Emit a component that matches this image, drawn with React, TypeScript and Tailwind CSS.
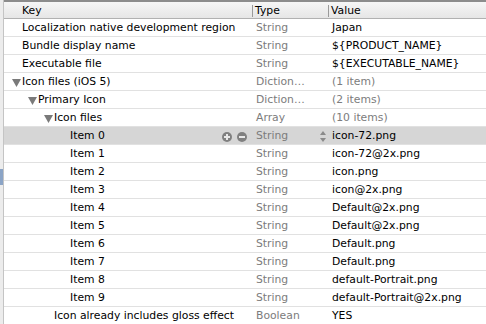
const rows = [
  { key: "Localization native development region", indent: 0, type: "String", value: "Japan" },
  { key: "Bundle display name", indent: 0, type: "String", value: "${PRODUCT_NAME}" },
  { key: "Executable file", indent: 0, type: "String", value: "${EXECUTABLE_NAME}" },
  { key: "Icon files (iOS 5)", indent: 0, type: "Diction…", value: "(1 item)", open: true },
  { key: "Primary Icon", indent: 1, type: "Diction…", value: "(2 items)", open: true },
  { key: "Icon files", indent: 2, type: "Array", value: "(10 items)", open: true },
  { key: "Item 0", indent: 3, type: "String", value: "icon-72.png", selected: true },
  { key: "Item 1", indent: 3, type: "String", value: "icon-72@2x.png" },
  { key: "Item 2", indent: 3, type: "String", value: "icon.png" },
  { key: "Item 3", indent: 3, type: "String", value: "icon@2x.png" },
  { key: "Item 4", indent: 3, type: "String", value: "Default@2x.png" },
  { key: "Item 5", indent: 3, type: "String", value: "Default@2x.png" },
  { key: "Item 6", indent: 3, type: "String", value: "Default.png" },
  { key: "Item 7", indent: 3, type: "String", value: "Default.png" },
  { key: "Item 8", indent: 3, type: "String", value: "default-Portrait.png" },
  { key: "Item 9", indent: 3, type: "String", value: "default-Portrait@2x.png" },
  { key: "Icon already includes gloss effect", indent: 2, type: "Boolean", value: "YES" },
];

const indentClass = ["pl-[18px]", "pl-[34px]", "pl-[50px]", "pl-[66px]"];

const Disclosure = () => (
  <svg width="9" height="8" viewBox="0 0 9 8" className="mr-px">
    <path d="M0 0 H9 L4.5 8 Z" fill="#7a7a7a" />
  </svg>
);

const RoundButton = ({ minus }: { minus?: boolean }) => (
  <svg width="10" height="10" viewBox="0 0 10 10">
    <circle cx="5" cy="5" r="5" fill="#808080" />
    <rect x="2" y="4" width="6" height="2" fill="#e8e8e8" />
    {!minus && <rect x="4" y="2" width="2" height="6" fill="#e8e8e8" />}
  </svg>
);

const Stepper = () => (
  <svg width="6" height="11" viewBox="0 0 6 11">
    <path d="M3 0 L6 4 H0 Z" fill="#8a8a8a" />
    <path d="M3 11 L6 7 H0 Z" fill="#8a8a8a" />
  </svg>
);

export default function App() {
  return (
    <div
      className="w-[486px] h-[324px] overflow-hidden bg-white text-[10.8px] text-black flex"
      style={{ fontFamily: '"DejaVu Sans", "Lucida Grande", sans-serif' }}
    >
      {/* left splitter strip */}
      <div className="w-[4px] shrink-0 flex flex-col bg-[#ececec] border-r border-[#c4c4c4]">
        <div className="h-[169px]" />
        <div className="h-[16px] bg-[#8ba4c6]" />
      </div>

      <div className="flex-1 flex flex-col min-w-0">
        {/* header */}
        <div className="h-[19px] shrink-0 flex items-center pt-[2px] border-t-2 border-t-[#8c8c8c] border-b border-b-[#b1b1b1] bg-gradient-to-b from-[#f6f6f6] to-[#e6e6e6]">
          <div className="w-[248px] pl-[18px]">Key</div>
          <div className="w-[76px] border-l border-[#9a9a9a] pl-[2px] leading-[12px]">Type</div>
          <div className="flex-1 border-l border-[#9a9a9a] pl-[2px] leading-[12px]">Value</div>
        </div>

        {rows.map((r, i) => (
          <div
            key={i}
            className={`h-[18px] shrink-0 flex items-center pt-[2px] border-b border-[#e1e1e1] ${r.selected ? "bg-[#d6d6d6]" : ""}`}
          >
            <div className={`w-[249px] flex items-center whitespace-nowrap ${indentClass[r.indent]}`}>
              {r.open && (
                <span className="-ml-[10px] flex items-center">
                  <Disclosure />
                </span>
              )}
              <span className="flex-1">{r.key}</span>
              {r.selected && (
                <span className="flex items-center gap-[5px] pr-[6px]">
                  <RoundButton />
                  <RoundButton minus />
                </span>
              )}
            </div>
            <div className="w-[76px] pl-[3px] text-[#7c7c7c] flex items-center">
              <span className="flex-1">{r.type}</span>
              {r.selected && (
                <span className="pr-[3px] flex items-center">
                  <Stepper />
                </span>
              )}
            </div>
            <div className={`flex-1 pl-[3px] whitespace-nowrap ${r.value.startsWith("(") ? "text-[#7c7c7c]" : ""}`}>
              {r.value}
            </div>
          </div>
        ))}
      </div>
    </div>
  );
}
